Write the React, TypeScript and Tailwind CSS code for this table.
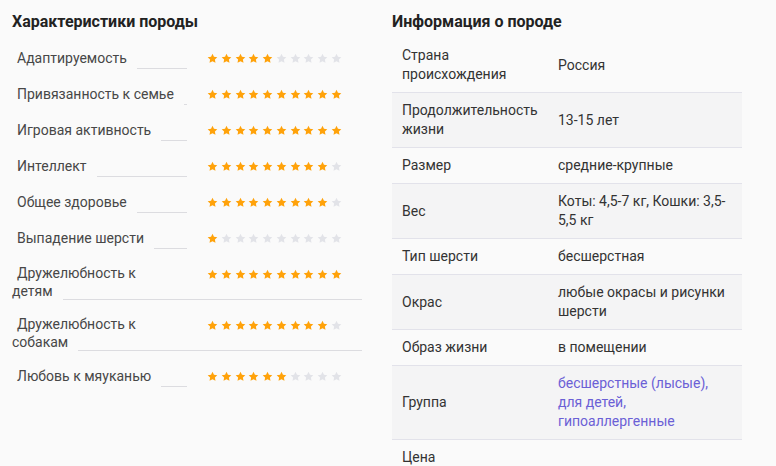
import React from "react";

const traits: { label: string; second?: string; value: number }[] = [
  { label: "Адаптируемость", value: 5 },
  { label: "Привязанность к семье", value: 10 },
  { label: "Игровая активность", value: 10 },
  { label: "Интеллект", value: 9 },
  { label: "Общее здоровье", value: 9 },
  { label: "Выпадение шерсти", value: 1 },
  { label: "Дружелюбность к", second: "детям", value: 10 },
  { label: "Дружелюбность к", second: "собакам", value: 9 },
  { label: "Любовь к мяуканью", value: 6 },
];

const info: { name: string[]; value: React.ReactNode }[] = [
  { name: ["Страна", "происхождения"], value: "Россия" },
  { name: ["Продолжительность", "жизни"], value: "13-15 лет" },
  { name: ["Размер"], value: "средние-крупные" },
  { name: ["Вес"], value: "Коты: 4,5-7 кг, Кошки: 3,5-5,5 кг" },
  { name: ["Тип шерсти"], value: "бесшерстная" },
  { name: ["Окрас"], value: "любые окрасы и рисунки шерсти" },
  { name: ["Образ жизни"], value: "в помещении" },
  {
    name: ["Группа"],
    value: (
      <span className="text-[#6b60d6]">
        бесшерстные (лысые),
        <br />
        для детей,
        <br />
        гипоаллергенные
      </span>
    ),
  },
  { name: ["Цена"], value: "" },
];

function Stars({ value }: { value: number }) {
  return (
    <div className="flex w-[175px] justify-center gap-[2.7px] pt-[5px]">
      {Array.from({ length: 10 }).map((_, i) => (
        <svg key={i} width="11" height="11" viewBox="0 0 24 24">
          <path
            d="M12 1.5l3.2 6.6 7.3 1-5.3 5.1 1.3 7.2L12 18l-6.5 3.4 1.3-7.2L1.5 9.1l7.3-1z"
            fill={i < value ? "#ffa20a" : "#e2e3e8"}
          />
        </svg>
      ))}
    </div>
  );
}

export default function App() {
  return (
    <div
      className="w-[776px] h-[466px] overflow-hidden bg-[#fafafa] pl-[12px] pt-[12px] flex gap-[30px] text-[14px]"
      style={{ fontFamily: "Roboto, 'Liberation Sans', sans-serif" }}
    >
      {/* Характеристики */}
      <div className="w-[350px]">
        <h2 className="text-[16px] leading-[20px] font-bold text-[#222]">Характеристики породы</h2>
        <div className="mt-[16px] flex flex-col gap-[15px] text-[#474747]">
          {traits.map((t, i) =>
            t.second ? (
              <div key={i}>
                <div className="flex">
                  <div className="w-[175px] pl-[5px] leading-[18px]">{t.label}</div>
                  <Stars value={t.value} />
                </div>
                <div className="flex">
                  <span className="leading-[18px]">{t.second}</span>
                  <div className="flex-1 ml-[10px] h-[18px] border-b border-[#dcdce0]" />
                </div>
              </div>
            ) : (
              <div key={i} className="flex">
                <div className="w-[175px] flex pl-[5px]">
                  <span className="leading-[20px] whitespace-nowrap">{t.label}</span>
                  <div className="flex-1 ml-[10px] h-[21px] border-b border-[#dcdce0]" />
                </div>
                <Stars value={t.value} />
              </div>
            )
          )}
        </div>
      </div>

      {/* Информация */}
      <div className="w-[350px]">
        <h2 className="text-[16px] leading-[20px] font-bold text-[#222]">Информация о породе</h2>
        <div className="mt-[6px] text-[#333] leading-[19px]">
          {info.map((r, i) => (
            <div
              key={i}
              className={`flex border-b border-[#e2e2ea] ${i % 2 === 1 ? "bg-[#f4f4f5]" : ""}`}
            >
              <div className="w-[156px] px-[10px] py-[8px] flex flex-col justify-center">
                {r.name.map((n) => (
                  <span key={n}>{n}</span>
                ))}
              </div>
              <div className="flex-1 px-[10px] py-[8px] flex items-center">
                <div>{r.value}</div>
              </div>
            </div>
          ))}
        </div>
      </div>
    </div>
  );
}
